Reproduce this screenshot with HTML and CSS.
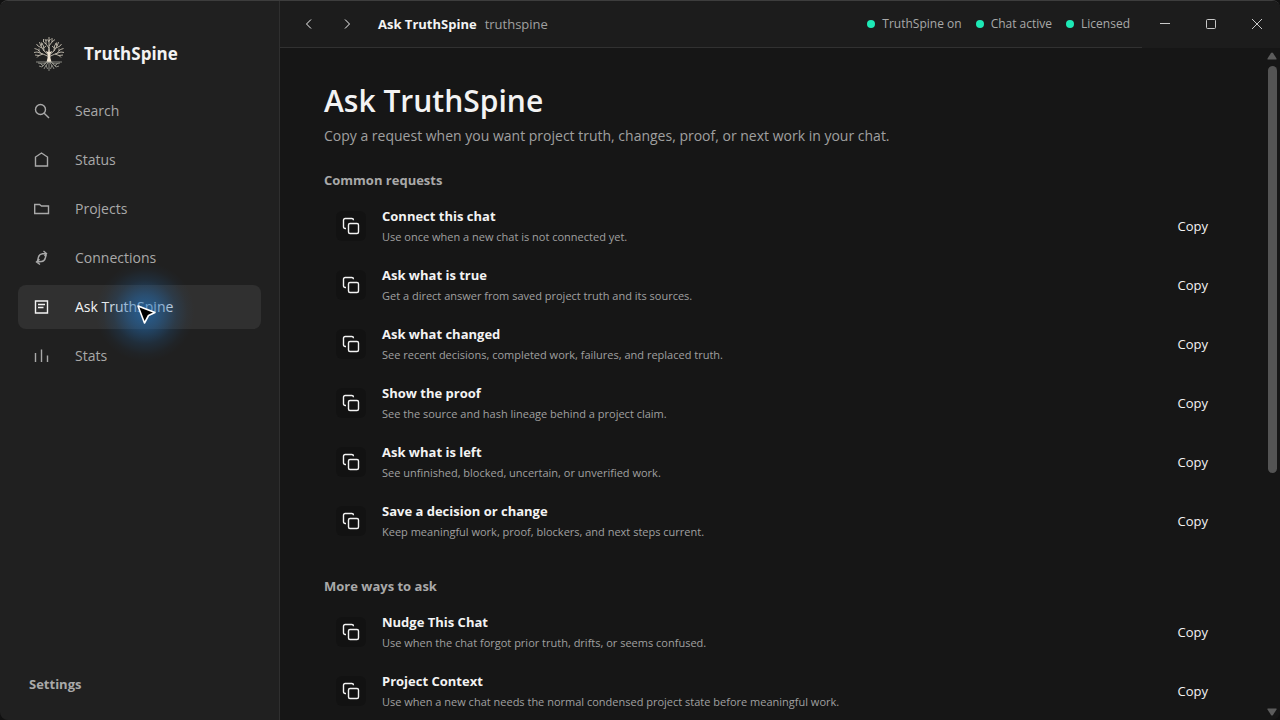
FILE: index.html
```html
<!DOCTYPE html>
<html lang="en">
<head>
    <meta charset="UTF-8">
    <meta name="viewport" content="width=device-width, initial-scale=1.0">
    <title>Ask TruthSpine</title>
    <link rel="stylesheet" href="styles.css">
</head>
<body>
    <!-- Shared icons -->
    <svg class="sprite" aria-hidden="true">
        <symbol id="icon-copy" viewBox="0 0 18 18">
            <path d="M4 11.5H3.2Q1.5 11.5 1.5 9.8V3.2Q1.5 1.5 3.2 1.5H9.8Q11.5 1.5 11.5 3.2"/>
            <rect x="6.5" y="6.5" width="10" height="10" rx="1.5"/>
        </symbol>
    </svg>

    <div class="window">
        <!-- Sidebar -->
        <aside class="sidebar">
            <div class="brand">
                <svg class="brand-logo" viewBox="0 0 32 36" aria-hidden="true">
                    <g class="trunk">
                        <path d="M13.500 26Q15 22 14.700 18L12.500 15L15.300 16L16 10L16.800 16L19.500 15L17.300 18Q17 22 18.500 26Z"/>
                    </g>
                    <g class="branches">
                        <path d="M16 17V1M16 12L13 8V3M16 10L19 6V2M16 6L14.500 3.500M16 5L17.500 3M13 8L10.500 6V3M19 6L22 3.500M13.500 5L12 3.500"/>
                        <path d="M15.500 19L11 15L7.500 9L6.500 6M11 15L10.500 10L8.500 6.500M10.700 12L13 10M9 12L5 10L3.500 8M8 10L9 7"/>
                        <path d="M15.500 20.500L10 18L4 16L1 16.500M8 17.400L4.500 13.500L1.500 12.500M6 15L6 12.500M10 18L6 19.500L2 19M6 19.500L4 21.500"/>
                        <path d="M16.500 19L21 15L24.500 9L25.500 6M21 15L21.500 10L23.500 6.500M21.300 12L19 10M23 12L27 10L28.500 8M24 10L23 7"/>
                        <path d="M16.500 20.500L22 18L28 16L31 16.500M24 17.400L27.500 13.500L30.500 12.500M26 15L26 12.500M22 18L26 19.500L30 19M26 19.500L28 21.500"/>
                    </g>
                    <g class="roots">
                        <path d="M3 26H29M15 26L10 28L5 27M13 27L9 31L6 30M10 30L8 28M15.500 26L12 31L11 33M13 29L14.500 33M16 26V35"/>
                        <path d="M17 26L22 28L27 27M19 27L23 31L26 30M22 30L24 28M16.500 26L20 31L21 33M19 29L17.500 33"/>
                    </g>
                </svg>
                <span class="brand-name">TruthSpine</span>
            </div>

            <nav class="nav">
                <a class="nav-item" href="#search">
                    <svg class="icon" viewBox="0 0 16 16"><circle cx="6.500" cy="6.500" r="5"/><path d="M10.200 10.200L15 15"/></svg>
                    Search
                </a>
                <a class="nav-item" href="#status">
                    <svg class="icon" viewBox="0 0 16 16"><path d="M1.500 14V5L7.500 1L13.500 5V14Z"/></svg>
                    Status
                </a>
                <a class="nav-item" href="#projects">
                    <svg class="icon" viewBox="0 0 16 16"><path d="M0.700 3.500H5.500L7.500 5H14.500V12.500H0.700Z"/></svg>
                    Projects
                </a>
                <a class="nav-item" href="#connections">
                    <svg class="icon" viewBox="0 0 16 16"><path d="M3.500 11L4.500 7Q5.200 4 8.500 3.700L12.500 3.500M9.500 1L12.500 3.500L10.500 6.200M12.300 4.500L11.300 8Q10.500 11.200 7.500 11.500L2.500 12M5.500 9.200L2.500 12L6 14.500"/></svg>
                    Connections
                </a>
                <a class="nav-item active" href="#ask">
                    <svg class="icon" viewBox="0 0 16 16"><path d="M1.500 2H13.500V14H1.500ZM4 5.500H11M4 8.500H9.500"/></svg>
                    Ask TruthSpine
                </a>
                <a class="nav-item" href="#stats">
                    <svg class="icon" viewBox="0 0 16 16"><path d="M1.500 5V14M7.500 1.500V14M13.500 7.500V14"/></svg>
                    Stats
                </a>
            </nav>

            <a class="settings" href="#settings">Settings</a>
        </aside>

        <div class="workspace">
            <!-- Title bar -->
            <header class="titlebar">
                <div class="toolbar">
                    <button class="nav-btn" aria-label="Back"><svg viewBox="0 0 12 12"><path d="M8 1.500L3.500 6L8 10.500"/></svg></button>
                    <button class="nav-btn" aria-label="Forward"><svg viewBox="0 0 12 12"><path d="M4 1.500L8.500 6L4 10.500"/></svg></button>
                    <strong class="page-name">Ask TruthSpine</strong>
                    <span class="project-name">truthspine</span>
                    <div class="status-list">
                        <span class="status">TruthSpine on</span>
                        <span class="status">Chat active</span>
                        <span class="status">Licensed</span>
                    </div>
                </div>
                <div class="window-controls">
                    <button class="window-btn" aria-label="Minimize"><svg viewBox="0 0 12 12"><path d="M1 5.500H11"/></svg></button>
                    <button class="window-btn" aria-label="Maximize"><svg viewBox="0 0 12 12"><rect x="1.500" y="1.500" width="9" height="9" rx="1"/></svg></button>
                    <button class="window-btn" aria-label="Close"><svg viewBox="0 0 12 12"><path d="M1 1L11 11M11 1L1 11"/></svg></button>
                </div>
            </header>

            <div class="scroll-view">
                <main class="content">
                    <h1>Ask TruthSpine</h1>
                    <p class="intro">Copy a request when you want project truth, changes, proof, or next work in your chat.</p>

                    <section class="group">
                        <h2>Common requests</h2>
                        <ul class="requests">
                            <li class="request">
                                <span class="tile"><svg><use href="#icon-copy"/></svg></span>
                                <div class="request-text">
                                    <h3>Connect this chat</h3>
                                    <p>Use once when a new chat is not connected yet.</p>
                                </div>
                                <button class="copy-btn">Copy</button>
                            </li>
                            <li class="request">
                                <span class="tile"><svg><use href="#icon-copy"/></svg></span>
                                <div class="request-text">
                                    <h3>Ask what is true</h3>
                                    <p>Get a direct answer from saved project truth and its sources.</p>
                                </div>
                                <button class="copy-btn">Copy</button>
                            </li>
                            <li class="request">
                                <span class="tile"><svg><use href="#icon-copy"/></svg></span>
                                <div class="request-text">
                                    <h3>Ask what changed</h3>
                                    <p>See recent decisions, completed work, failures, and replaced truth.</p>
                                </div>
                                <button class="copy-btn">Copy</button>
                            </li>
                            <li class="request">
                                <span class="tile"><svg><use href="#icon-copy"/></svg></span>
                                <div class="request-text">
                                    <h3>Show the proof</h3>
                                    <p>See the source and hash lineage behind a project claim.</p>
                                </div>
                                <button class="copy-btn">Copy</button>
                            </li>
                            <li class="request">
                                <span class="tile"><svg><use href="#icon-copy"/></svg></span>
                                <div class="request-text">
                                    <h3>Ask what is left</h3>
                                    <p>See unfinished, blocked, uncertain, or unverified work.</p>
                                </div>
                                <button class="copy-btn">Copy</button>
                            </li>
                            <li class="request">
                                <span class="tile"><svg><use href="#icon-copy"/></svg></span>
                                <div class="request-text">
                                    <h3>Save a decision or change</h3>
                                    <p>Keep meaningful work, proof, blockers, and next steps current.</p>
                                </div>
                                <button class="copy-btn">Copy</button>
                            </li>
                        </ul>
                    </section>

                    <section class="group">
                        <h2>More ways to ask</h2>
                        <ul class="requests">
                            <li class="request">
                                <span class="tile"><svg><use href="#icon-copy"/></svg></span>
                                <div class="request-text">
                                    <h3>Nudge This Chat</h3>
                                    <p>Use when the chat forgot prior truth, drifts, or seems confused.</p>
                                </div>
                                <button class="copy-btn">Copy</button>
                            </li>
                            <li class="request">
                                <span class="tile"><svg><use href="#icon-copy"/></svg></span>
                                <div class="request-text">
                                    <h3>Project Context</h3>
                                    <p>Use when a new chat needs the normal condensed project state before meaningful work.</p>
                                </div>
                                <button class="copy-btn">Copy</button>
                            </li>
                        </ul>
                    </section>
                </main>

                <!-- Scrollbar -->
                <div class="scrollbar" aria-hidden="true">
                    <svg class="scroll-arrow" viewBox="0 0 10 8"><path d="M4 1Q5 0 6 1L9.500 6.500V7.500H0.500V6.500Z"/></svg>
                    <div class="scroll-track"><div class="scroll-thumb"></div></div>
                    <svg class="scroll-arrow" viewBox="0 0 10 8"><path d="M0.500 0.500H9.500V1.500L6 7Q5 8 4 7L0.500 1.500Z"/></svg>
                </div>
            </div>
        </div>
    </div>

    <!-- Mouse pointer with its highlight -->
    <div class="pointer" aria-hidden="true">
        <svg viewBox="0 0 24 24"><path d="M3 4L20 10.500L13.500 13.500L9.500 21Z"/></svg>
    </div>
</body>
</html>
```
FILE: styles.css
```css
* {
    margin: 0;
    padding: 0;
    box-sizing: border-box;
}

body {
    font-family: 'Open Sans', 'Noto Sans', sans-serif;
    background: #111111;
    color: #f3f3f3;
    font-size: 14px;
    line-height: 20px;
    overflow: hidden;
}

button {
    font: inherit;
    color: inherit;
    background: none;
    border: none;
}

a {
    color: inherit;
    text-decoration: none;
}

svg {
    fill: none;
    stroke: currentColor;
}

.sprite {
    position: absolute;
    width: 0;
    height: 0;
}

.window {
    display: flex;
    height: 100vh;
    border-top: 1px solid #3d3d3d;
    border-radius: 8px;
    overflow: hidden;
}

/* Sidebar */
.sidebar {
    display: flex;
    flex-direction: column;
    width: 280px;
    flex-shrink: 0;
    padding: 33px 18px 26px;
    background: #202020;
    border-right: 1px solid #2f2f2f;
    color: #a9a9a9;
}

.brand {
    display: flex;
    align-items: center;
    gap: 19px;
    height: 40px;
    padding-left: 15px;
    margin-bottom: 15px;
}

.brand-logo {
    width: 32px;
    height: 36px;
}

.brand-logo .trunk {
    fill: #f0e4d2;
    stroke: none;
}

.brand-logo .branches {
    stroke: #d8d0c2;
    stroke-width: 0.8;
}

.brand-logo .roots {
    stroke: #a5a49c;
    stroke-width: 0.8;
}

.brand-name {
    font-size: 17px;
    font-weight: 700;
    color: #f3f3f3;
}

.nav {
    display: flex;
    flex-direction: column;
    gap: 5px;
    flex: 1;
}

.nav-item {
    display: flex;
    align-items: center;
    gap: 25px;
    height: 44px;
    padding-left: 16px;
    border-radius: 8px;
}

.nav-item.active {
    background: #303030;
    color: #f3f3f3;
}

.icon {
    width: 16px;
    height: 16px;
    stroke-width: 1.4;
}

.settings {
    padding-left: 11px;
    font-size: 13px;
    font-weight: 700;
}

/* Title bar */
.workspace {
    display: flex;
    flex-direction: column;
    flex: 1;
    min-width: 0;
    background: #161616;
}

.titlebar {
    display: flex;
    height: 47px;
    flex-shrink: 0;
    background: #1c1c1c;
    font-size: 13px;
}

.toolbar {
    display: flex;
    align-items: center;
    flex: 1;
    padding: 0 12px 1px 10px;
    border-bottom: 1px solid #313131;
}

.nav-btn {
    display: flex;
    align-items: center;
    justify-content: center;
    width: 38px;
    height: 32px;
}

.nav-btn svg,
.window-btn svg {
    width: 12px;
    height: 12px;
}

.page-name {
    margin-left: 12px;
    font-weight: 700;
}

.project-name {
    margin-left: 8px;
    color: #a0a0a0;
}

.status-list {
    display: flex;
    gap: 14px;
    margin-left: auto;
    font-size: 12px;
    color: #a9a9a9;
}

.status {
    display: flex;
    align-items: center;
    gap: 7px;
}

.status::before {
    content: '';
    width: 8px;
    height: 8px;
    border-radius: 50%;
    background: #1de9b6;
}

.window-controls {
    display: flex;
    padding-bottom: 2px;
}

.window-btn {
    display: flex;
    align-items: center;
    justify-content: center;
    width: 46px;
    color: #c8c8c8;
}

/* Scrolling page */
.scroll-view {
    display: flex;
    flex: 1;
    min-height: 0;
}

.content {
    flex: 1;
    padding: 33px 40px 0 44px;
    overflow: hidden;
}

h1 {
    font-size: 30px;
    font-weight: 600;
    line-height: 40px;
}

.intro {
    margin-top: 5px;
    color: #a0a0a0;
}

.group {
    padding-top: 24px;
}

.group h2 {
    margin-bottom: 6px;
    font-size: 13px;
    font-weight: 700;
    color: #a9a9a9;
}

.requests {
    list-style: none;
    margin-bottom: 2px;
}

.request {
    display: flex;
    align-items: center;
    gap: 16px;
    height: 59px;
    padding: 0 8px 0 12px;
}

.tile {
    display: flex;
    align-items: center;
    justify-content: center;
    width: 30px;
    height: 30px;
    border-radius: 6px;
    background: #121212;
}

.tile svg {
    width: 18px;
    height: 18px;
    stroke-width: 1.4;
}

.request-text {
    flex: 1;
    padding-top: 2px;
}

.request-text h3 {
    font-size: 13px;
    font-weight: 700;
}

.request-text p {
    margin-top: 1px;
    font-size: 11px;
    color: #a0a0a0;
}

.copy-btn {
    padding: 6px 8px;
    font-size: 13px;
}

.scrollbar {
    display: flex;
    flex-direction: column;
    align-items: center;
    gap: 6px;
    width: 16px;
    padding: 4px 0;
}

.scroll-arrow {
    width: 10px;
    height: 8px;
    fill: #5c5c5c;
    stroke: none;
}

.scroll-track {
    flex: 1;
}

.scroll-thumb {
    width: 9px;
    height: 64%;
    border-radius: 5px;
    background: #545454;
}

/* Pointer */
.pointer {
    position: absolute;
    left: 95px;
    top: 262px;
    width: 100px;
    height: 100px;
    background: radial-gradient(circle, rgba(36, 112, 182, 0.75) 0%, rgba(36, 108, 176, 0.5) 24%, rgba(32, 100, 165, 0.2) 45%, rgba(32, 96, 160, 0.05) 60%, rgba(32, 96, 160, 0) 70%);
    pointer-events: none;
}

.pointer svg {
    width: 24px;
    height: 24px;
    margin: 40px 0 0 40px;
    fill: #000000;
    stroke: #ffffff;
    stroke-width: 1.6;
    stroke-linejoin: round;
}
```
